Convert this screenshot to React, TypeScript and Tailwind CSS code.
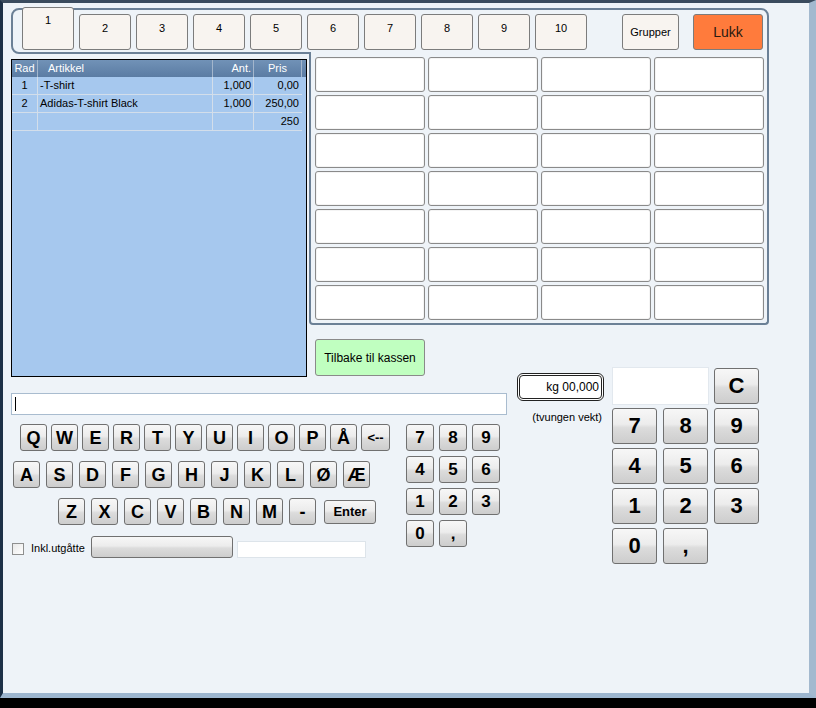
import React from 'react'

const keyCls =
  'flex items-center justify-center rounded-[3px] border border-[#707070] bg-[linear-gradient(to_bottom,#f7f7f7_0%,#ececec_45%,#dcdcdc_55%,#cdcdcd_100%)] font-bold text-black leading-none'

const tabCls =
  'flex justify-center rounded-[3px] border border-[#7c7c7c] bg-[#f8f4f0] pt-[6px] text-[11px] leading-[13px] text-black'

function Key({ label, w = 27, h = 27, size = 18 }: { label: string; w?: number; h?: number; size?: number }) {
  return (
    <div className={keyCls} style={{ width: w, height: h, fontSize: size }}>
      {label}
    </div>
  )
}

export default function App() {
  const row1 = ['Q', 'W', 'E', 'R', 'T', 'Y', 'U', 'I', 'O', 'P', 'Å']
  const row2 = ['A', 'S', 'D', 'F', 'G', 'H', 'J', 'K', 'L', 'Ø', 'Æ']
  const row3 = ['Z', 'X', 'C', 'V', 'B', 'N', 'M', '-']
  const small = ['7', '8', '9', '4', '5', '6', '1', '2', '3', '0', ',']
  const big = ['7', '8', '9', '4', '5', '6', '1', '2', '3', '0', ',']
  const rows = [
    { rad: '1', art: '-T-shirt', ant: '1,000', pris: '0,00' },
    { rad: '2', art: 'Adidas-T-shirt Black', ant: '1,000', pris: '250,00' },
    { rad: '', art: '', ant: '', pris: '250' },
  ]

  return (
    <div className="h-[708px] w-[816px] overflow-hidden bg-black font-['Liberation_Sans',Arial,sans-serif]">
      <div className="h-[698px] w-[816px] border-t-[3px] border-l-[3px] border-r-[7px] border-b-[5px] border-t-[#3a4b5e] border-l-[#1c3047] border-r-[#a3b9cf] border-b-[#9db6cf]">
        <div className="flex h-full flex-col bg-[#eef3f8]">
          {/* tab strip */}
          <div className="ml-[8px] mt-[5px] flex h-[46px] w-[758px] items-end rounded-tl-[8px] rounded-tr-[8px] rounded-bl-[8px] border-2 border-[#6b8096] pb-[2px] pl-[9px]">
            <div className={`${tabCls} h-[43px] w-[52px]`}>1</div>
            {['2', '3', '4', '5', '6', '7', '8', '9', '10'].map((t) => (
              <div key={t} className={`${tabCls} ml-[5px] h-[36px] w-[52px] pt-[7px]`}>
                {t}
              </div>
            ))}
            <div className="ml-[35px] flex h-[36px] w-[57px] items-center justify-center rounded-[3px] border border-[#7c7c7c] bg-[#f8f4f0] text-[11px] text-black">
              Grupper
            </div>
            <div className="ml-[14px] flex h-[36px] w-[70px] items-center justify-center rounded-[3px] border border-[#7c7c7c] bg-[#ff7b3c] text-[14px] text-[#2a1a10]">
              Lukk
            </div>
          </div>

          {/* table + grid */}
          <div className="flex items-start">
            <div className="ml-[8px] mt-[5px] h-[318px] w-[296px] border border-black bg-[#a6c8ee] text-[11px] text-black">
              <div className="flex h-[17px] bg-linear-to-b from-[#7192b7] to-[#5b7ca3] leading-[17px] text-white">
                <div className="w-[26px] border-r border-[#a3b6cc] text-center">Rad</div>
                <div className="w-[175px] border-r border-[#a3b6cc] pl-[10px]">Artikkel</div>
                <div className="w-[41px] border-r border-[#a3b6cc] pr-[2px] text-right">Ant.</div>
                <div className="w-[48px] border-r border-[#a3b6cc] text-center">Pris</div>
                <div className="w-[4px]" />
              </div>
              {rows.map((r, i) => (
                <div key={i} className="flex h-[18px] w-[290px] border-b border-[#d3deea] leading-[17px]">
                  <div className="w-[26px] border-r border-[#d3deea] text-center">{r.rad}</div>
                  <div className="w-[175px] border-r border-[#d3deea] pl-[2px]">{r.art}</div>
                  <div className="w-[41px] border-r border-[#d3deea] pr-[2px] text-right">{r.ant}</div>
                  <div className="w-[48px] pr-[3px] text-right">{r.pris}</div>
                </div>
              ))}
            </div>

            <div className="ml-[2px] -mt-[2px] flex flex-col">
              <div className="relative z-10 w-[460px] rounded-b-[4px] border-x-2 border-b-2 border-[#6b8096] bg-[#eef3f8] pb-[3px] pl-[4px] pt-[5px]">
                <div className="grid grid-cols-[repeat(4,110px)] gap-[3px]">
                  {Array.from({ length: 28 }).map((_, i) => (
                    <div key={i} className="h-[35px] rounded-[3px] border border-[#8a8a8a] bg-white shadow-[inset_0_0_0_1px_#f4f4f4]" />
                  ))}
                </div>
              </div>
              <div className="ml-[6px] mt-[14px] flex h-[37px] w-[110px] items-center justify-center rounded-[3px] border border-[#8a8a8a] bg-[#c0ffc0] text-[12px] text-black">
                Tilbake til kassen
              </div>
            </div>
          </div>

          {/* lower part */}
          <div className="flex items-start">
            <div className="ml-[8px] mt-[16px] flex w-[496px] flex-col">
              <div className="flex h-[22px] items-center border border-[#a9bccf] bg-white pl-[3px]">
                <span className="h-[14px] w-px bg-black" />
              </div>
              <div className="mt-[9px] flex items-start">
                <div className="flex w-[381px] flex-col">
                  <div className="ml-[9px] flex gap-[4px]">
                    {row1.map((k) => (
                      <Key key={k} label={k} />
                    ))}
                    <Key label="<--" w={29} size={13} />
                  </div>
                  <div className="ml-[2px] mt-[10px] flex gap-[6px]">
                    {row2.map((k) => (
                      <Key key={k} label={k} />
                    ))}
                  </div>
                  <div className="ml-[47px] mt-[10px] flex items-center gap-[6px]">
                    {row3.map((k) => (
                      <Key key={k} label={k} />
                    ))}
                    <div className="ml-[2px]">
                      <Key label="Enter" w={52} h={24} size={13} />
                    </div>
                  </div>
                  <div className="mt-[11px] flex h-[22px] items-center">
                    <div className="ml-px mt-[4px] h-[12px] w-[12px] border border-[#8e8f8f] bg-linear-to-br from-[#e8e8e8] to-white" />
                    <span className="ml-[7px] mt-[2px] text-[11px] text-black">Inkl.utgåtte</span>
                    <div className="ml-[6px] h-[22px] w-[142px] rounded-[3px] border border-[#707070] bg-[linear-gradient(to_bottom,#f7f7f7_0%,#ececec_45%,#dcdcdc_55%,#cdcdcd_100%)]" />
                    <div className="ml-[4px] mt-[5px] h-[17px] w-[129px] border border-[#dde4ea] bg-white" />
                  </div>
                </div>
                <div className="ml-[14px] grid grid-cols-[repeat(3,28px)] gap-x-[5px] gap-y-[5px]">
                  {small.map((k, i) => (
                    <Key key={i} label={k} w={28} h={27} size={17} />
                  ))}
                </div>
              </div>
            </div>

            <div className="ml-[10px] -mt-[10px] flex flex-col items-end">
              <div className="mt-[6px] flex h-[28px] w-[87px] items-center justify-end rounded-[6px] border-[3px] border-double border-[#222] bg-white pr-[2px] text-[12px] text-black">
                kg 00,000
              </div>
              <div className="mt-[10px] pr-[2px] text-[11px] leading-[13px] text-black">(tvungen vekt)</div>
            </div>

            <div className="ml-[8px] -mt-[10px] flex flex-col">
              <div className="flex items-start">
                <div className="h-[38px] w-[97px] border border-[#e2e8ee] bg-white" />
                <div className="ml-[5px] mt-px">
                  <Key label="C" w={45} h={36} size={22} />
                </div>
              </div>
              <div className="mt-[3px] grid grid-cols-[repeat(3,45px)] gap-x-[6px] gap-y-[4px]">
                {big.map((k, i) => (
                  <Key key={i} label={k} w={45} h={36} size={22} />
                ))}
              </div>
            </div>
          </div>
        </div>
      </div>
    </div>
  )
}
